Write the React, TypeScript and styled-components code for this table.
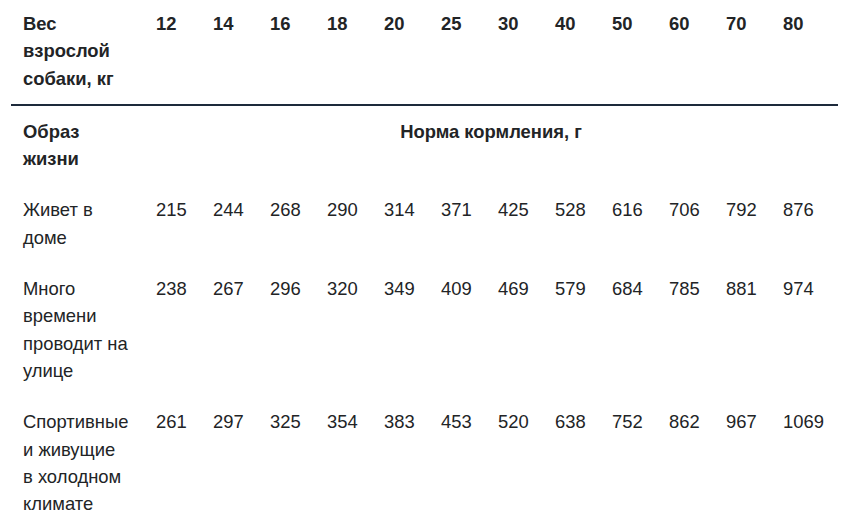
import React from 'react';
import styled, { createGlobalStyle } from 'styled-components';

const weights = ['12', '14', '16', '18', '20', '25', '30', '40', '50', '60', '70', '80'];

const rows = [
  {
    label: ['Живет в', 'доме'],
    values: [215, 244, 268, 290, 314, 371, 425, 528, 616, 706, 792, 876],
  },
  {
    label: ['Много', 'времени', 'проводит на', 'улице'],
    values: [238, 267, 296, 320, 349, 409, 469, 579, 684, 785, 881, 974],
  },
  {
    label: ['Спортивные', 'и живущие', 'в холодном', 'климате'],
    values: [261, 297, 325, 354, 383, 453, 520, 638, 752, 862, 967, 1069],
  },
];

export default function App() {
  return (
    <>
      <GlobalStyle />
      <Page>
        <Table>
          <HeadRow>
            <Cell $bold>
              Вес
              <br />
              взрослой
              <br />
              собаки, кг
            </Cell>
            {weights.map((w) => (
              <Cell key={w} $bold>
                {w}
              </Cell>
            ))}
          </HeadRow>
          <Row>
            <Cell $bold>
              Образ
              <br />
              жизни
            </Cell>
            <SpanCell $bold>Норма кормления, г</SpanCell>
          </Row>
          {rows.map((row, i) => (
            <Row key={i}>
              <Cell>
                {row.label.map((line, j) => (
                  <React.Fragment key={j}>
                    {j > 0 && <br />}
                    {line}
                  </React.Fragment>
                ))}
              </Cell>
              {row.values.map((v, j) => (
                <Cell key={j}>{v}</Cell>
              ))}
            </Row>
          ))}
        </Table>
      </Page>
    </>
  );
}

const GlobalStyle = createGlobalStyle`
  html, body {
    margin: 0;
    padding: 0;
    background: #ffffff;
  }
  body {
    font-family: "Liberation Sans", Arial, sans-serif;
    color: #222426;
  }
`;

const Page = styled.div`
  width: 852px;
  height: 524px;
  overflow: hidden;
  padding: 0 14px 0 11px;
  box-sizing: border-box;
`;

const Table = styled.div`
  display: flex;
  flex-direction: column;
  width: 827px;
`;

const Row = styled.div`
  display: grid;
  grid-template-columns: 133px repeat(11, 57px) 67px;
  padding: 12px 0;
`;

const HeadRow = styled(Row)`
  padding: 10px 0 12px;
  border-bottom: 2px solid #1d2a3b;
`;

const Cell = styled.div<{ $bold?: boolean }>`
  padding: 0 0 0 12px;
  font-size: 18.4px;
  line-height: 27.3px;
  font-weight: ${(p) => (p.$bold ? 700 : 400)};
  white-space: nowrap;
`;

const SpanCell = styled(Cell)`
  grid-column: 2 / -1;
  padding: 0;
  text-align: center;
`;
